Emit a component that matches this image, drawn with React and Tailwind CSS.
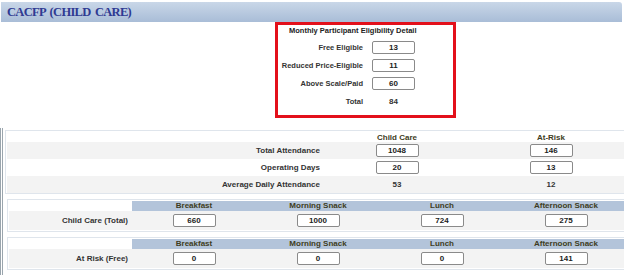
import React from "react";

const Box = ({ value }) => (
  <div className="w-[43px] h-[13px] mx-auto border border-[#8a8a8a] rounded-[2px] bg-white flex items-center justify-center text-[8px] font-bold text-[#222] leading-none">
    {value}
  </div>
);

const eligibility = [
  { label: "Free Eligible", value: "13" },
  { label: "Reduced Price-Eligible", value: "11" },
  { label: "Above Scale/Paid", value: "60" },
];

const attendance = [
  { label: "Total Attendance", cc: "1048", ar: "146", input: true },
  { label: "Operating Days", cc: "20", ar: "13", input: true },
  { label: "Average Daily Attendance", cc: "53", ar: "12", input: false },
];

const meals = ["Breakfast", "Morning Snack", "Lunch", "Afternoon Snack"];

const MealTable = ({ label, values }) => (
  <div className="ml-[4px] border border-[#dfe5ec] border-r-0 py-[1px] pl-[1px]">
    <div className="grid grid-cols-[123px_repeat(4,124px)]">
      <div className="h-[9px] bg-white" />
      {meals.map((m) => (
        <div
          key={m}
          className="h-[10px] bg-[#b3c4da] flex items-center justify-center text-[8px] font-bold text-[#3e3c22] leading-none"
        >
          {m}
        </div>
      ))}
      <div className="h-[19px] bg-[#f3f3f3] flex items-center justify-end pr-[4px] text-[8px] font-bold text-[#333] leading-none">
        {label}
      </div>
      {values.map((v, i) => (
        <div key={i} className="h-[19px] bg-[#f3f3f3] flex items-center">
          <Box value={v} />
        </div>
      ))}
    </div>
  </div>
);

const App = () => {
  return (
    <div className="w-[624px] h-[275px] bg-white overflow-hidden font-['Liberation_Sans',Arial,sans-serif]">
      <div className="ml-[1px] mt-[2px] w-[621px] h-[20px] rounded-tr-[3px] bg-gradient-to-b from-[#c9d7e8] to-[#a9bdd7] flex items-center pl-[6px]">
        <span className="font-['Liberation_Serif',serif] font-bold text-[12.5px] tracking-[-0.7px] [word-spacing:2px] text-[#2f3a92] leading-none">
          CACFP (CHILD CARE)
        </span>
      </div>

      <div className="ml-[275px] w-[181px] h-[96px] border-[3px] border-[#e3101b] pt-[1px]">
        <div className="pl-[11px] text-[7.5px] font-bold text-[#222] leading-[10px] whitespace-nowrap">
          Monthly Participant Eligibility Detail
        </div>
        <div className="grid grid-cols-[85px_52px] gap-y-[5px] mt-[5px]">
          {eligibility.map((r) => (
            <React.Fragment key={r.label}>
              <div className="h-[13px] flex items-center justify-end text-[7.5px] font-bold text-[#333] leading-none whitespace-nowrap">
                {r.label}
              </div>
              <div className="h-[13px] flex items-center pl-[9px]">
                <div className="w-[43px] h-[13px] border border-[#8a8a8a] rounded-[2px] bg-white flex items-center justify-center text-[8px] font-bold text-[#222] leading-none">
                  {r.value}
                </div>
              </div>
            </React.Fragment>
          ))}
          <div className="h-[13px] flex items-center justify-end text-[7.5px] font-bold text-[#333] leading-none">
            Total
          </div>
          <div className="h-[13px] flex items-center pl-[9px]">
            <span className="w-[43px] text-center text-[8px] font-bold text-[#333] leading-none">84</span>
          </div>
        </div>
      </div>

      <div className="mt-[10px] h-[200px] border-l-[3px] border-double border-[#9aa5ad] pt-[2px] flex flex-col gap-[5px]">
        <div className="ml-[2px] border border-[#dfe5ec] border-r-0 pl-[1px]">
          <div className="grid grid-cols-[313px_154px_154px]">
            <div className="h-[11px]" />
            <div className="h-[11px] flex items-end justify-center text-[8px] font-bold text-[#3e3c22] leading-none">
              Child Care
            </div>
            <div className="h-[11px] flex items-end justify-center text-[8px] font-bold text-[#3e3c22] leading-none">
              At-Risk
            </div>
            {attendance.map((r, i) => (
              <React.Fragment key={r.label}>
                <div
                  className={`h-[17px] flex items-center justify-end text-[8px] font-bold text-[#333] leading-none ${
                    i === 1 ? "bg-white" : "bg-[#f3f3f3]"
                  }`}
                >
                  {r.label}
                </div>
                {[r.cc, r.ar].map((v, j) => (
                  <div
                    key={j}
                    className={`h-[17px] flex items-center justify-center ${
                      i === 1 ? "bg-white" : "bg-[#f3f3f3]"
                    }`}
                  >
                    {r.input ? (
                      <Box value={v} />
                    ) : (
                      <span className="text-[8px] font-bold text-[#333] leading-none">{v}</span>
                    )}
                  </div>
                ))}
              </React.Fragment>
            ))}
          </div>
        </div>

        <MealTable label="Child Care (Total)" values={["660", "1000", "724", "275"]} />
        <MealTable label="At Risk (Free)" values={["0", "0", "0", "141"]} />
      </div>
    </div>
  );
};

export default App;
